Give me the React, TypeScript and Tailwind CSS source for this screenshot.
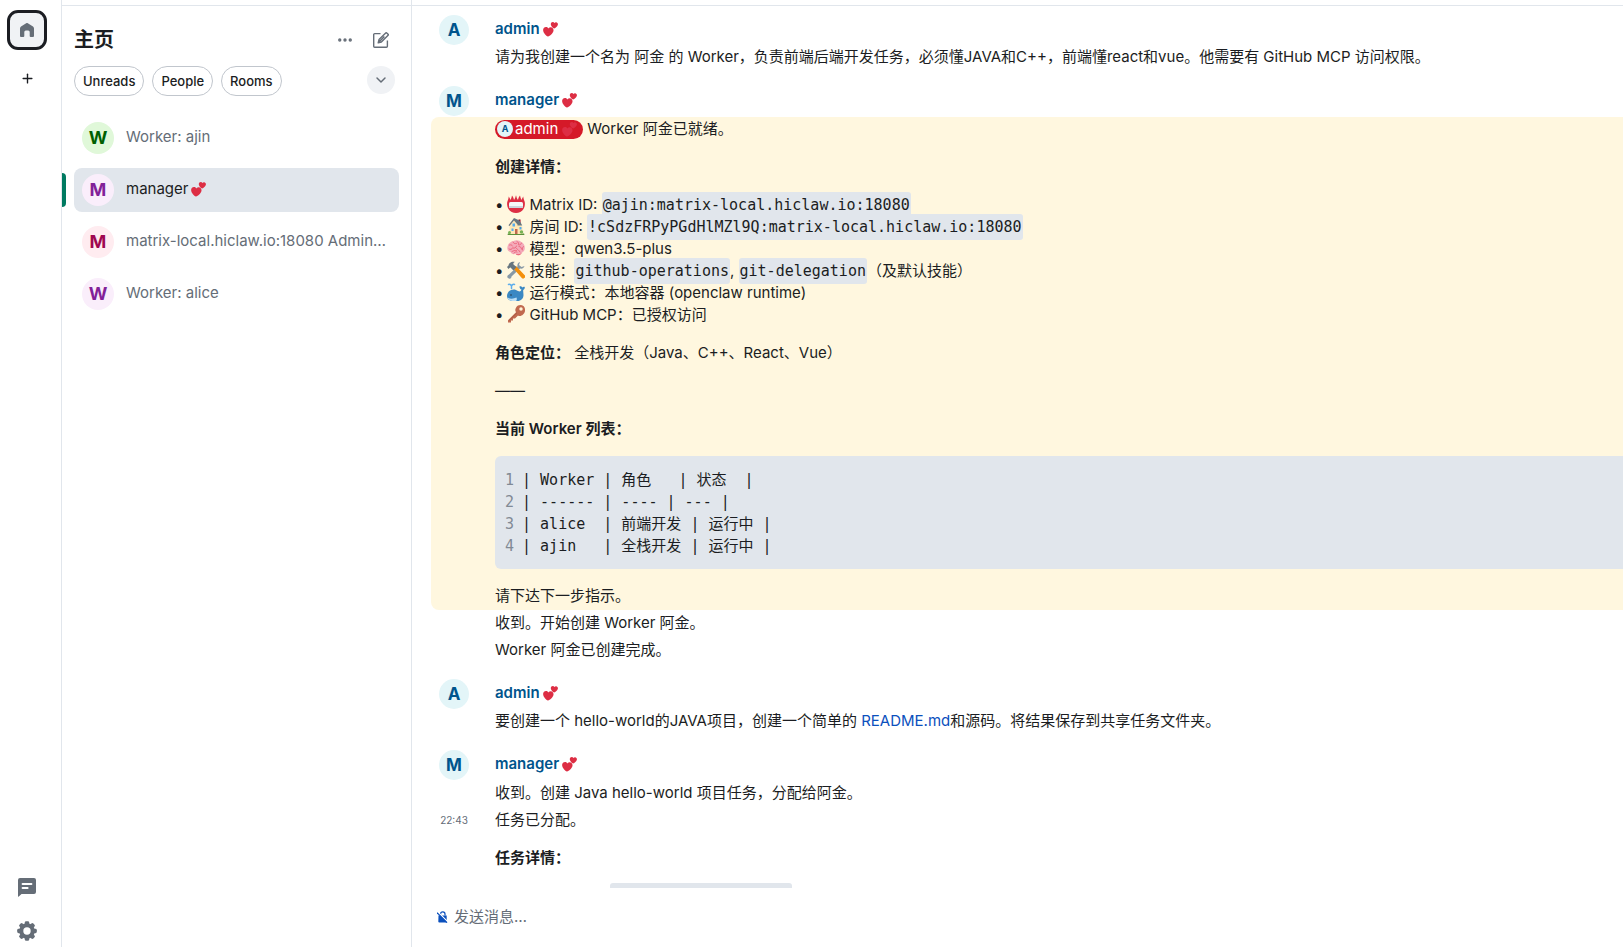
import React from 'react'
import { ChevronDown, Ellipsis, Plus } from 'lucide-react'
import clsx from 'clsx'

const HEART =
  'M35.885 11.833c0-5.45-4.418-9.868-9.867-9.868-3.308 0-6.227 1.633-8.018 4.129-1.791-2.496-4.71-4.129-8.017-4.129-5.45 0-9.868 4.417-9.868 9.868 0 .772.098 1.52.266 2.241C1.751 22.587 11.216 31.568 18 34.034c6.783-2.466 16.249-11.447 17.617-19.959.17-.721.268-1.469.268-2.242z'

function Hearts({ className }: { className?: string }) {
  return (
    <svg viewBox="0 0 36 36" className={clsx('inline-block size-[15px] align-[-2px]', className)} aria-hidden="true">
      <g fill="#dd2e44">
        <path transform="translate(0 11) rotate(3 12 12) scale(.7)" d={HEART} />
        <path transform="translate(18.5 -.5) rotate(3 8 8) scale(.48)" d={HEART} />
      </g>
    </svg>
  )
}

function Emoji({ children }: { children: React.ReactNode }) {
  return (
    <svg viewBox="0 0 36 36" className="mx-1 inline-block size-[18px] align-[-3px]" aria-hidden="true">
      {children}
    </svg>
  )
}

const badge = (
  <Emoji>
    <path fill="#dd2e44" d="M35 12.5C34 10 33 7 32.5 3c-1.500 2-2.700 4.500-3.500 7-1.500-2.500-2.500-6-3-9-2 2.500-3.500 5.500-4 9-1.800-2-3-6-4-9.500-1 3.500-2.200 7.500-4 9.500-.5-3.500-2-6.500-4-9-.5 3-1.500 6.500-3 9-.8-2.500-2-5-3.500-7C3 7 2 10 1 12.500-.5 16 0 23 3 28c3 5 9 8 15 8s12-3 15-8c3-5 3.500-12 2-15.500z" />
    <rect x="4" y="14" width="28" height="12" rx="3" fill="#f5f8fa" />
    <path fill="#ccd6dd" d="M4 22h28v1a3 3 0 0 1-3 3H7a3 3 0 0 1-3-3z" />
  </Emoji>
)

const house = (
  <Emoji>
    <path fill="#5c913b" d="M2 33h32a2 2 0 0 1 0 3H2a2 2 0 0 1 0-3z" />
    <path fill="#a0041e" d="M23 5h4v9h-4z" />
    <path fill="#ffe8b6" d="M5 17 14 7l5 4 12 9v14H5z" />
    <path fill="#66757f" d="M14 2 3 16.500l2 1.500L14 7l7 8v2h9.500L25 7z" />
    <path fill="#55acee" d="M11 13h5v6h-5zM9 23h4v5H9zM25 20h4v5h-4z" />
    <path fill="#c1694f" d="M16 24h5v10h-5z" />
    <circle cx="29" cy="30" r="3.500" fill="#77b255" />
    <circle cx="5" cy="31" r="3" fill="#77b255" />
  </Emoji>
)

const brain = (
  <Emoji>
    <path fill="#ea596e" d="M29.900 26.500c-.3 2-2 4-4.500 5.500-3 1-6.400.5-8-1.500z" />
    <path fill="#f4abba" d="M35.500 17c.8 5-2 9.500-6 10.500-3 3.500-8.500 4-12 2-5 2-9.500 0-10.500-3.500C2 25.500-.5 20 1 15.500 2 9 7.500 5 12 4.500 18 1 26 2.500 29 6.500c4 1.500 6.500 6 6.500 10.500z" />
    <path fill="none" stroke="#ea596e" strokeWidth="1.600" strokeLinecap="round" d="M5 12c3-1 5 0 6 2M12 6c1 3 4 4 7 3M20 5c3 1 4 4 3 6M29 8c-1 3-3 4-5 4M4 20c3 2 6 1 7-2M12 18c3 1 6 0 7-4M24 15c3 0 5 2 5 5M33 15c-2 2-3 4-2 7M10 25c3-1 5-3 9-2M19 19c2 2 5 3 7 7M14 28c1-2 4-3 6-2" />
  </Emoji>
)

const tools = (
  <Emoji>
    <path fill="#8899a6" d="M26 2c-4 1-6 5-5 9L4 27c-3 1-4 4-3 6s4 3 6 2c1-1 2-2 2-4l17-16c4 1 8-1 9-5l-6 2-5-4z" />
    <path fill="#f4900c" d="m13 15 5-5 17 18a4 4 0 0 1-5.500 6z" />
    <path fill="#66757f" d="M3 16 0 12l3-3c0-4 6-9 13-7-3 1-4 3-3 5l6 5-6 7-6-6c-1 0-2 1-4 3z" />
  </Emoji>
)

const whale = (
  <Emoji>
    <path fill="#3b88c3" d="M35.500 8c-1.500-1-4 0-5 1-1-2-3.500-3-5.500-2 0 3 1.500 5.500 4 6-1 4-4 5-7 3-4-3-9-4-14-2-5 2-8 7-8 12 0 6 5 10 12 10h9c7 0 12-5 12-12 0-4-1-7-.5-10C34.500 13 36 11 35.500 8z" />
    <path fill="#bddff6" d="M1 29c5 3 12 3 18 0 1 3 1 5-1 7h-7c-5 0-8-2-10-7z" />
    <circle cx="8" cy="24" r="1.500" fill="#292f33" />
    <path fill="none" stroke="#5dadec" strokeWidth="3" strokeLinecap="round" d="M9 11V6M9 6C8 3 5 2 3 3M9 6c1-3 4-4 6-3" />
  </Emoji>
)

const key = (
  <Emoji>
    <path fill="#c1694f" d="M33.500 2.500c-5-4-12-3-15 2-2.500 4-2.500 7-.5 10L2 30.500V35h6v-4h4v-4h4l6-6c3 2 7 1 10-2 5-4 5.500-12 1.500-16.500z" />
    <circle cx="28" cy="8" r="3.500" fill="#fff3d6" />
    <path fill="none" stroke="#a0553f" strokeWidth="1.500" d="M4 31 20 15.500" />
  </Emoji>
)

function HomeIcon() {
  return (
    <svg viewBox="0 0 14 14" className="size-[14px] fill-[#656d77]" aria-hidden="true">
      <path d="M0 5.600c0-.8.3-1.500 1-2L5.800.4a2 2 0 0 1 2.400 0L13 3.600c.7.5 1 1.200 1 2V13a1 1 0 0 1-1 1h-2.300a1 1 0 0 1-1-1V9a1.500 1.500 0 0 0-1.500-1.500H5.800A1.500 1.500 0 0 0 4.300 9v4a1 1 0 0 1-1 1H1a1 1 0 0 1-1-1z" />
    </svg>
  )
}

function ThreadsIcon() {
  return (
    <svg viewBox="0 0 18 19" className="h-[19px] w-[18px]" aria-hidden="true">
      <path fill="#656d77" d="M2 0h14a2 2 0 0 1 2 2v12a2 2 0 0 1-2 2H3.500L.8 18.600A.5.5 0 0 1 0 18.200V2a2 2 0 0 1 2-2z" />
      <path fill="none" stroke="#fff" strokeWidth="2" strokeLinecap="round" d="M4.600 6h8.800M4.600 10h5" />
    </svg>
  )
}

const teeth = [0, 45, 90, 135, 180, 225, 270, 315]

function GearIcon() {
  return (
    <svg viewBox="0 0 20 20" className="size-5" aria-hidden="true">
      <g fill="#656d77">
        <circle cx="10" cy="10" r="7.800" />
        {teeth.map((deg) => (
          <rect key={deg} x="7.800" y="0.200" width="4.400" height="5" rx="1.400" transform={`rotate(${deg} 10 10)`} />
        ))}
      </g>
      <circle cx="10" cy="10" r="3.700" fill="#fff" />
    </svg>
  )
}

function ComposeIcon() {
  return (
    <svg viewBox="0 0 16 16" className="size-4" fill="none" stroke="#656d77" strokeWidth="1.400" strokeLinejoin="round" aria-hidden="true">
      <path d="M7.500 1.600H1.700a1 1 0 0 0-1 1v11.700a1 1 0 0 0 1 1h11.700a1 1 0 0 0 1-1V8.500" />
      <path d="M5.200 10.800 6 7.600 12.700.9a.7.7 0 0 1 1 0l1.400 1.400a.7.7 0 0 1 0 1L8.400 10zM6.200 9.800l5.200-5.200" />
    </svg>
  )
}

function LockOffIcon() {
  return (
    <svg viewBox="0 0 11 12" className="h-3 w-[11px]" aria-hidden="true">
      <path fill="#0b50bd" d="M1.500 4.500h8.200v6a1 1 0 0 1-1 1H2.300a1 1 0 0 1-1-1z" />
      <path fill="none" stroke="#0b50bd" strokeWidth="1.200" d="M3.600 4.500V3a2.200 2.200 0 0 1 4.400 0v1.500" />
      <path stroke="#fff" strokeWidth="1.200" d="m.8 1 10 10" />
      <path stroke="#0b50bd" strokeWidth="1.200" d="m0 1.700 10 10" />
    </svg>
  )
}

const rooms = [
  { letter: 'W', name: 'Worker: ajin', color: 'bg-[#e0f8d9] text-[#005f00]' },
  { letter: 'M', name: 'manager', color: 'bg-[#faeefb] text-[#822198]', active: true },
  { letter: 'M', name: 'matrix-local.hiclaw.io:18080 Admin…', color: 'bg-[#ffecf0] text-[#9f0850]' },
  { letter: 'W', name: 'Worker: alice', color: 'bg-[#faeefb] text-[#822198]' },
]

const tableLines = [
  '| Worker | 角色   | 状态  |',
  '| ------ | ---- | --- |',
  '| alice  | 前端开发 | 运行中 |',
  '| ajin   | 全栈开发 | 运行中 |',
]

function Code({ children }: { children: React.ReactNode }) {
  return (
    <code className="rounded-[3px] bg-[#e1e6ec] px-px py-1 font-['DejaVu_Sans_Mono','Noto_Sans_CJK_SC',monospace] text-[15px]">
      {children}
    </code>
  )
}

function Group({ sender, children }: { sender: string; children: React.ReactNode }) {
  return (
    <section>
      <header className="flex h-[31px] items-start pl-[27px]">
        <span className="flex size-[30px] items-center justify-center rounded-full bg-[#e3f5f8] text-[17px] font-bold text-[#00548c]">
          {sender[0].toUpperCase()}
        </span>
        <span className="ml-[26px] flex items-center gap-[3px] pt-[3px] font-semibold text-[#00548c]">
          {sender}
          <Hearts />
        </span>
      </header>
      {children}
    </section>
  )
}

type MessageProps = {
  time?: string
  spacing?: 'none' | 'tight' | 'normal'
  children: React.ReactNode
}

const spacings = { none: '', tight: 'pt-px', normal: 'pt-0.5' }

function Message({ time, spacing = 'normal', children }: MessageProps) {
  return (
    <div className={clsx('flex pb-[3px] pl-[27px]', spacings[spacing])}>
      <time className="w-[30px] shrink-0 text-center text-[10px] leading-[22px] text-[#656d77]">{time}</time>
      <div className="ml-[26px] flex min-w-0 flex-1 flex-col gap-4">{children}</div>
    </div>
  )
}

export default function App() {
  return (
    <div
      lang="zh-CN"
      className="flex h-screen overflow-hidden bg-white font-['Inter','Noto_Sans_CJK_SC',sans-serif] text-[15px] leading-[22px] text-[#1b1d22]"
    >
      <nav className="flex w-[62px] shrink-0 flex-col items-center border-r border-[#e1e6ec] pt-2.5 pr-[7px] pb-1">
        <button aria-label="主页" className="flex size-10 items-center justify-center rounded-[11px] border-3 border-[#1b1d22] bg-[#f0f2f5]">
          <HomeIcon />
        </button>
        <button aria-label="创建空间" className="mt-4 flex size-6 items-center justify-center">
          <Plus size={15} strokeWidth={2.2} />
        </button>
        <button aria-label="消息列" className="mt-auto flex size-6 items-center justify-center">
          <ThreadsIcon />
        </button>
        <button aria-label="设置" className="mt-5 flex size-6 items-center justify-center">
          <GearIcon />
        </button>
      </nav>

      <aside className="w-[350px] shrink-0 border-r border-[#e1e6ec] pt-[5px]">
        <div className="border-t border-[#e1e6ec] px-3">
          <div className="flex h-15 items-center pt-2">
            <h1 className="flex-1 text-xl font-bold">主页</h1>
            <button aria-label="更多选项" className="flex size-7 items-center justify-center text-[#656d77]">
              <Ellipsis size={18} strokeWidth={2.5} />
            </button>
            <button aria-label="新消息" className="mr-1 ml-2 flex size-7 items-center justify-center">
              <ComposeIcon />
            </button>
          </div>
          <div className="flex items-start gap-2">
            {['Unreads', 'People', 'Rooms'].map((label) => (
              <button key={label} className="h-[30px] rounded-full border border-[#c1c6cd] px-2 text-[13px] font-medium">
                {label}
              </button>
            ))}
            <button aria-label="展开" className="mr-1 ml-auto flex size-7 items-center justify-center rounded-full bg-[#f0f2f5] text-[#656d77]">
              <ChevronDown size={16} strokeWidth={2.2} />
            </button>
          </div>
        </div>
        <ul className="mt-5 flex flex-col gap-2">
          {rooms.map((room) => (
            <li key={room.name} className="relative px-3">
              {room.active && <span className="absolute top-[5px] left-0 h-[34px] w-1 rounded-r bg-[#007a61]" />}
              <a
                href="#"
                className={clsx('flex h-11 items-center rounded-lg px-2', room.active ? 'bg-[#e1e6ec]' : 'text-[#656d77]')}
              >
                <span className={clsx('flex size-8 shrink-0 items-center justify-center rounded-full text-lg font-bold', room.color)}>
                  {room.letter}
                </span>
                <span className="ml-3 flex items-center gap-[3px] pb-0.5 whitespace-nowrap">
                  {room.name} {room.active && <Hearts />}
                </span>
              </a>
            </li>
          ))}
        </ul>
      </aside>

      <main className="flex min-w-0 flex-1 flex-col pt-[5px]">
        <div className="flex min-h-0 flex-1 flex-col gap-[15px] overflow-hidden border-t border-[#e1e6ec] pt-[9px]">
          <Group sender="admin">
            <Message spacing="none">
              <p>请为我创建一个名为 阿金 的 Worker，负责前端后端开发任务，必须懂JAVA和C++，前端懂react和vue。他需要有 GitHub MCP 访问权限。</p>
            </Message>
          </Group>

          <Group sender="manager">
            <div className="ml-[19px] rounded-l-lg bg-[#fff7df]">
              <div className="-ml-[19px]">
                <Message spacing="tight">
                  <div className="flex items-center gap-1">
                    <span className="flex h-[19px] items-center rounded-full bg-[#d51928] pr-1.5 pl-0.5 text-white">
                      <span className="mr-0.5 flex size-4 items-center justify-center rounded-full bg-[#e3f5f8] text-[9px] font-bold text-[#00548c]">
                        A
                      </span>
                      admin
                      <Hearts className="ml-1" />
                    </span>
                    Worker 阿金已就绪。
                  </div>
                  <p className="font-semibold">创建详情：</p>
                  <ul className="[&>li]:h-[22px]">
                    <li>•{badge}Matrix ID: <Code>@ajin:matrix-local.hiclaw.io:18080</Code></li>
                    <li>•{house}房间 ID: <Code>!cSdzFRPyPGdHlMZl9Q:matrix-local.hiclaw.io:18080</Code></li>
                    <li>•{brain}模型：qwen3.5-plus</li>
                    <li>•{tools}技能：<Code>github-operations</Code>, <Code>git-delegation</Code>（及默认技能）</li>
                    <li>•{whale}运行模式：本地容器 (openclaw runtime)</li>
                    <li>•{key}GitHub MCP：已授权访问</li>
                  </ul>
                  <p><strong className="font-semibold">角色定位：</strong> 全栈开发（Java、C++、React、Vue）</p>
                  <p>——</p>
                  <p className="font-semibold">当前 Worker 列表：</p>
                  <pre className="rounded-l-md bg-[#e1e6ec] pt-[13px] pb-3 pl-2.5 font-['DejaVu_Sans_Mono','Noto_Sans_CJK_SC',monospace]">
                    {tableLines.map((line, i) => (
                      <div key={i}>
                        <span className="mr-2 text-[#818a95]">{i + 1}</span>
                        {line}
                      </div>
                    ))}
                  </pre>
                  <p>请下达下一步指示。</p>
                </Message>
              </div>
            </div>
            <Message><p>收到。开始创建 Worker 阿金。</p></Message>
            <Message><p>Worker 阿金已创建完成。</p></Message>
          </Group>

          <Group sender="admin">
            <Message spacing="none">
              <p>
                要创建一个 hello-world的JAVA项目，创建一个简单的 <a href="#" className="text-[#0b50bd]">README.md</a>和源码。将结果保存到共享任务文件夹。
              </p>
            </Message>
          </Group>

          <Group sender="manager">
            <Message spacing="tight"><p>收到。创建 Java hello-world 项目任务，分配给阿金。</p></Message>
            <Message time="22:43">
              <p>任务已分配。</p>
              <p className="font-semibold">任务详情：</p>
              <p>• Task location: <Code>hello-world-20250301</Code></p>
            </Message>
          </Group>
        </div>

        <label className="flex h-[59px] shrink-0 items-center gap-1.5 pr-4 pb-0.5 pl-[25px]">
          <LockOffIcon />
          <input
            aria-label="发送消息"
            placeholder="发送消息…"
            className="min-w-0 flex-1 outline-none placeholder:text-[#656d77]"
          />
        </label>
      </main>
    </div>
  )
}
